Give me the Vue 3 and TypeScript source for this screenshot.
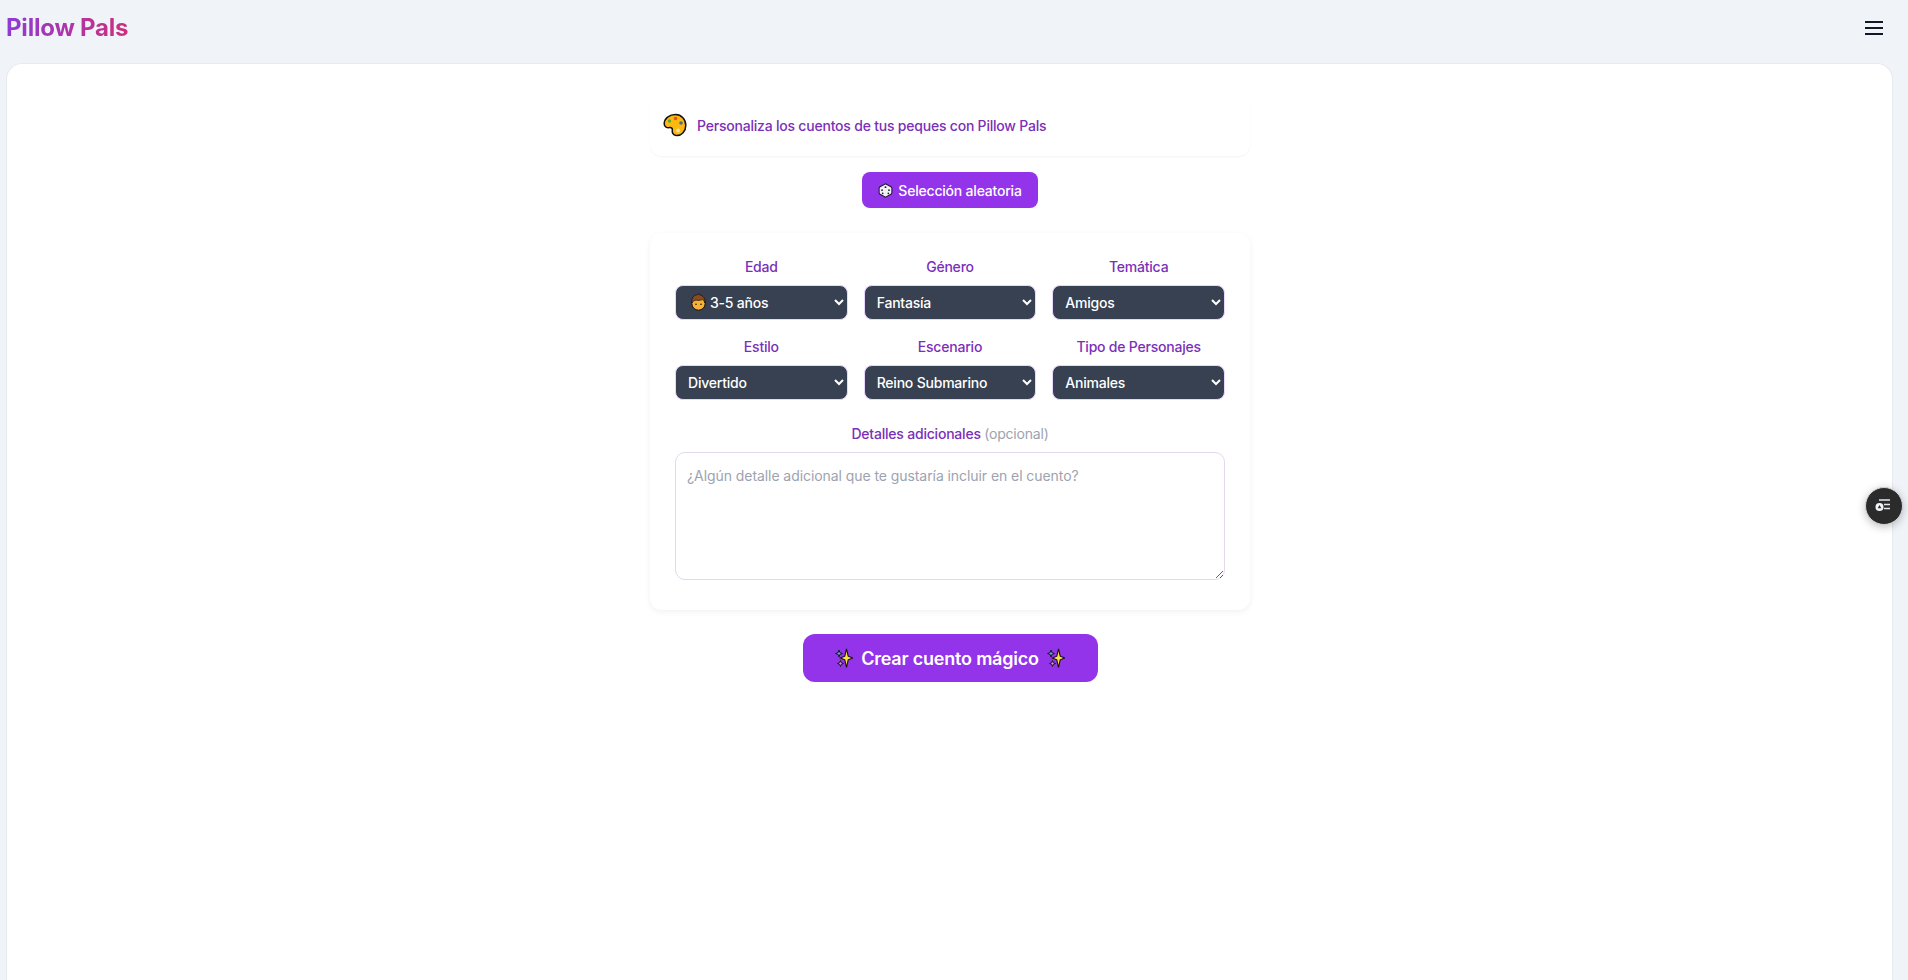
<script setup lang="ts">
interface Field {
  label: string
  value: string
  emoji?: boolean
}

const fields: Field[] = [
  { label: 'Edad', value: '3-5 años', emoji: true },
  { label: 'Género', value: 'Fantasía' },
  { label: 'Temática', value: 'Amigos' },
  { label: 'Estilo', value: 'Divertido' },
  { label: 'Escenario', value: 'Reino Submarino' },
  { label: 'Tipo de Personajes', value: 'Animales' },
]
</script>

<template>
  <div class="page">
    <header class="topbar">
      <span class="brand">Pillow Pals</span>
      <button class="menu" aria-label="Menú">
        <svg width="24" height="24" viewBox="0 0 24 24" fill="none" stroke="#111827" stroke-width="2">
          <path d="M3 6h18M3 12h18M3 18h18" />
        </svg>
      </button>
    </header>

    <main class="sheet">
      <div class="column">
        <div class="intro">
          <svg class="intro-icon" width="24" height="24" viewBox="0 0 24 24">
            <path d="M12.5 1.5C6.5 1.5 1.2 5.5 1.2 10.8c0 3.4 3 4 5.2 3.8 2.2-.2 3.2.6 2.9 2.4-.3 2 .1 5.300 4.100 5.500 5.300.3 9.400-4.300 9.400-10.200C22.800 6.500 18.500 1.500 12.500 1.500z" fill="#fcb912" stroke="#111" stroke-width="1.500" />
            <circle cx="6.500" cy="8" r="1.700" fill="#5aa63c" />
            <circle cx="12.500" cy="5.500" r="1.800" fill="#e2562b" />
            <circle cx="18" cy="10" r="1.800" fill="#4a6d8c" />
            <circle cx="15" cy="17.500" r="1.900" fill="#f4e3a3" />
          </svg>
          <span>Personaliza los cuentos de tus peques con Pillow Pals</span>
        </div>

        <button class="random">
          <svg width="15" height="15" viewBox="0 0 16 16">
            <path d="M8 .8l5.800 3.200q1 .6 1 1.600v4.800q0 1-1 1.600L8 15.200 2.200 12q-1-.6-1-1.600V5.600q0-1 1-1.600z" fill="#f1f1f4" stroke="#1d1730" stroke-width="1.100" />
            <circle cx="8" cy="4.400" r="1" fill="#1d1730" />
            <circle cx="4.300" cy="7.600" r=".9" fill="#1d1730" />
            <circle cx="5" cy="11" r=".9" fill="#1d1730" />
            <circle cx="11.700" cy="7.600" r=".9" fill="#1d1730" />
            <circle cx="11" cy="11" r=".9" fill="#1d1730" />
          </svg>
          Selección aleatoria
        </button>

        <section class="form">
          <div class="grid">
            <div v-for="field in fields" :key="field.label" class="field">
              <label>{{ field.label }}</label>
              <div class="select-wrap">
                <svg v-if="field.emoji" class="kid" width="17" height="18" viewBox="0 0 17 18">
                  <circle cx="8.500" cy="10.500" r="6.700" fill="#f9b233" stroke="#111" stroke-width="1" />
                  <path d="M1.800 10C1.300 5 4 1.500 7.500 1.800c.5-.8 1.800-1 2.500-.6-.2.3-.2.6 0 .9 3.500.6 5.500 4 5 7.900-.7-1.800-1.500-2.900-2.600-3.400-2 .9-4.600 1-6.400.5-1.800.5-3.300 1.500-4.200 2.900z" fill="#8a4b1f" stroke="#111" stroke-width=".7" />
                  <circle cx="6" cy="11.200" r=".8" fill="#111" />
                  <circle cx="11" cy="11.200" r=".8" fill="#111" />
                </svg>
                <select :class="{ 'has-emoji': field.emoji }">
                  <option>{{ field.value }}</option>
                </select>
              </div>
            </div>
          </div>

          <div class="details">
            <label>Detalles adicionales <span>(opcional)</span></label>
            <textarea placeholder="¿Algún detalle adicional que te gustaría incluir en el cuento?"></textarea>
          </div>
        </section>

        <button class="create">
          <svg width="18" height="21" viewBox="0 0 18 21">
            <path d="M11.500.8l1.700 7.400 4.400 1.800-4.400 1.800-1.700 7.700-1.700-7.700L5.400 10l4.400-1.800z" fill="#fde047" stroke="#111" stroke-width="1.100" />
            <path d="M4 2l.9 2.600 2.500.9-2.500.9L4 9l-.9-2.600-2.500-.9 2.500-.9z" fill="#4fb6e8" stroke="#111" stroke-width=".9" />
            <path d="M5.500 12.500l.8 2.200 2.200.8-2.200.8-.8 2.200-.8-2.200-2.200-.8 2.200-.8z" fill="#d59ad8" stroke="#111" stroke-width=".9" />
          </svg>
          Crear cuento mágico
          <svg width="18" height="21" viewBox="0 0 18 21">
            <path d="M11.500.8l1.700 7.400 4.400 1.800-4.400 1.800-1.700 7.700-1.700-7.700L5.400 10l4.400-1.800z" fill="#fde047" stroke="#111" stroke-width="1.100" />
            <path d="M4 2l.9 2.600 2.500.9-2.500.9L4 9l-.9-2.600-2.500-.9 2.500-.9z" fill="#4fb6e8" stroke="#111" stroke-width=".9" />
            <path d="M5.500 12.500l.8 2.200 2.200.8-2.200.8-.8 2.200-.8-2.200-2.200-.8 2.200-.8z" fill="#d59ad8" stroke="#111" stroke-width=".9" />
          </svg>
        </button>
      </div>
    </main>

    <button class="float" aria-label="Opciones">
      <svg width="22" height="22" viewBox="0 0 22 22" fill="none" stroke="#e5e7eb" stroke-width="1.300">
        <path d="M6 5h11M11 9.500h6M11 13.500h6" />
        <circle cx="6.500" cy="12" r="4" fill="#f3f4f6" stroke="none" />
        <path d="M6.500 10l1.800 3.200H4.700z" fill="#2b2b2b" stroke="none" />
      </svg>
    </button>
  </div>
</template>

<style>
body {
  background: #f0f4f9;
}
</style>

<style scoped>
.page {
  height: 980px;
  display: flex;
  flex-direction: column;
  overflow: hidden;
  position: relative;
  font-family: Inter, 'Noto Sans', sans-serif;
  font-size: 14px;
  letter-spacing: -0.015em;
}

.topbar {
  height: 63px;
  flex: none;
  display: flex;
  align-items: center;
  justify-content: space-between;
  padding: 0 22px 8px 6px;
  box-sizing: border-box;
}

.brand {
  font-size: 24px;
  font-weight: 700;
  background: linear-gradient(90deg, #8f3bd6, #cc2f7c);
  -webkit-background-clip: text;
  background-clip: text;
  color: transparent;
}

.menu {
  width: 24px;
  height: 24px;
  padding: 0;
  border: 0;
  background: none;
}

.sheet {
  flex: 1;
  margin: 0 15px 0 6px;
  background: #fff;
  border: 1px solid #e5e9f0;
  border-bottom: 0;
  border-radius: 16px 16px 0 0;
  display: flex;
  justify-content: center;
}

.column {
  width: 600px;
  margin-left: 1px;
  padding-top: 32px;
  display: flex;
  flex-direction: column;
  align-items: center;
}

.intro {
  width: 100%;
  height: 60px;
  box-sizing: border-box;
  padding: 0 13px 2px;
  display: flex;
  align-items: center;
  gap: 10px;
  border-radius: 12px;
  color: #7a30b8;
  font-weight: 500;
  box-shadow: 0 1px 2px rgba(0, 0, 0, 0.05);
}

.random {
  margin-top: 16px;
  width: 176px;
  height: 36px;
  display: flex;
  align-items: center;
  justify-content: center;
  gap: 5px;
  border: 0;
  border-radius: 8px;
  background: #9333ea;
  color: #fff;
  font: inherit;
  font-weight: 500;
  letter-spacing: inherit;
}

.form {
  margin-top: 25px;
  width: 100%;
  box-sizing: border-box;
  padding: 24px 25px 30px;
  border-radius: 12px;
  background: #fff;
  box-shadow: 0 2px 6px rgba(0, 0, 0, 0.06);
}

.grid {
  display: grid;
  grid-template-columns: repeat(3, 1fr);
  column-gap: 16px;
  row-gap: 17px;
}

.field,
.details {
  display: flex;
  flex-direction: column;
  gap: 8px;
}

label {
  text-align: center;
  line-height: 20px;
  color: #7a30b8;
  font-weight: 500;
}

.select-wrap {
  position: relative;
}

.kid {
  position: absolute;
  left: 15px;
  top: 8px;
  pointer-events: none;
}

select {
  width: 100%;
  height: 35px;
  box-sizing: border-box;
  padding: 0 8px;
  border: 1px solid #e9d5ff;
  border-radius: 8px;
  background-color: #374151;
  color: #fff;
  font: inherit;
  font-weight: 500;
  letter-spacing: inherit;
}

select.has-emoji {
  padding-left: 30px;
}

.details {
  margin-top: 24px;
}

.details span {
  color: #9ca3af;
  font-weight: 400;
}

textarea {
  height: 128px;
  box-sizing: border-box;
  padding: 11px 11px;
  border: 1px solid #e4d8ec;
  border-radius: 10px;
  background: #fff;
  font: inherit;
  letter-spacing: -0.005em;
  line-height: 24px;
  resize: vertical;
}

textarea::placeholder {
  color: #9ca3af;
}

.create {
  margin-top: 24px;
  width: 295px;
  height: 48px;
  display: flex;
  align-items: center;
  justify-content: center;
  gap: 8px;
  border: 0;
  border-radius: 12px;
  background: #9333ea;
  color: #fff;
  font: inherit;
  font-size: 18px;
  font-weight: 600;
  letter-spacing: inherit;
}

.float {
  position: absolute;
  left: 1865px;
  top: 487px;
  width: 38px;
  height: 38px;
  padding: 0;
  display: flex;
  align-items: center;
  justify-content: center;
  border: 1px solid #d1d5db;
  border-radius: 50%;
  background: #2b2b2b;
  box-shadow: 0 2px 8px rgba(0, 0, 0, 0.25);
}
</style>
